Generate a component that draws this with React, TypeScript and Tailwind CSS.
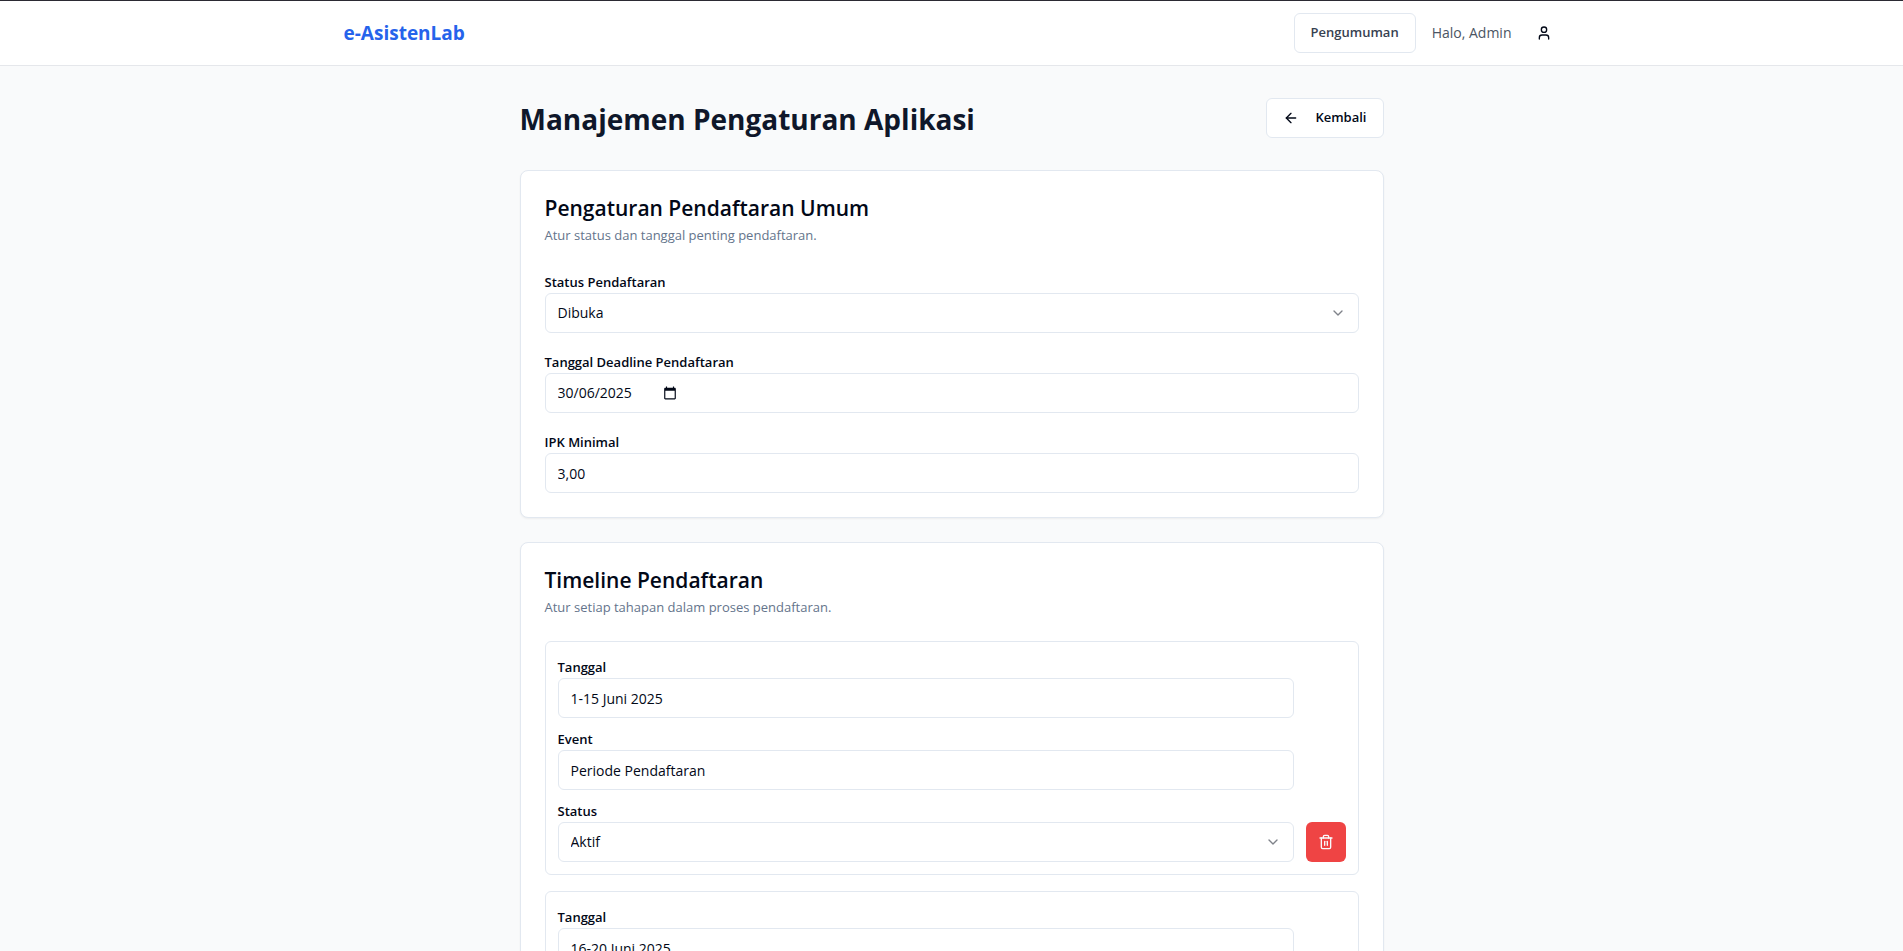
import { useState } from "react";
import type { ReactNode } from "react";
import { ArrowLeft, ChevronDown, Trash2, User } from "lucide-react";

type Stage = { id: number; date: string; event: string; status: string };

const INITIAL_STAGES: Stage[] = [
  { id: 1, date: "1-15 Juni 2025", event: "Periode Pendaftaran", status: "Aktif" },
  { id: 2, date: "16-20 Juni 2025", event: "", status: "Aktif" },
];

const CONTROL =
  "h-10 w-full rounded-md border border-[#e2e8f0] bg-white px-3 text-sm text-[#020817] outline-none focus:ring-2 focus:ring-[#94a3b8]";

function Field({ id, label, children }: { id: string; label: string; children: ReactNode }) {
  return (
    <div>
      <div className="flex h-6 items-center pt-0.5">
        <label htmlFor={id} className="text-[13px] leading-none font-semibold">
          {label}
        </label>
      </div>
      {children}
    </div>
  );
}

function Select({
  id,
  value,
  options,
  onChange,
}: {
  id: string;
  value: string;
  options: string[];
  onChange: (v: string) => void;
}) {
  return (
    <div className="relative">
      <select
        id={id}
        value={value}
        onChange={(e) => onChange(e.target.value)}
        className={`${CONTROL} appearance-none`}
      >
        {options.map((o) => (
          <option key={o}>{o}</option>
        ))}
      </select>
      <ChevronDown className="pointer-events-none absolute top-3 right-[13px] size-4 text-[#020817] opacity-50" />
    </div>
  );
}

function Card({ title, description, children }: { title: string; description: string; children: ReactNode }) {
  return (
    <section className="rounded-lg border border-[#e2e8f0] bg-white shadow-xs">
      <div className="flex flex-col gap-1 p-6">
        <h2 className="text-[21px] leading-[26px] font-semibold">{title}</h2>
        <p className="text-[13px] leading-5 text-[#64748b]">{description}</p>
      </div>
      <div className="flex flex-col gap-4 px-6 pb-6">{children}</div>
    </section>
  );
}

function CalendarIcon() {
  return (
    <svg viewBox="0 0 24 24" className="size-3.5" fill="currentColor" aria-hidden="true">
      <path d="M20 3h-1V1h-2v2H7V1H5v2H4c-1.100 0-2 .9-2 2v16c0 1.100.9 2 2 2h16c1.100 0 2-.9 2-2V5c0-1.100-.9-2-2-2zm0 18H4V8h16v13z" />
    </svg>
  );
}

export default function App() {
  const [open, setOpen] = useState("Dibuka");
  const [deadline, setDeadline] = useState("30/06/2025");
  const [gpa, setGpa] = useState("3,00");
  const [stages, setStages] = useState(INITIAL_STAGES);

  const update = (id: number, patch: Partial<Stage>) =>
    setStages((prev) => prev.map((s) => (s.id === id ? { ...s, ...patch } : s)));

  return (
    <div className="min-h-screen border-t border-[#2b2a33] bg-[#f9fafb] font-['Open_Sans','Noto_Sans',sans-serif] text-[#020817]">
      <header className="border-b border-[#e5e7eb] bg-white">
        <div className="mx-auto flex h-16 max-w-7xl items-center justify-between px-8">
          <a href="#" className="text-[19px] font-bold text-[#2563eb]">
            e-AsistenLab
          </a>
          <div className="flex items-center gap-4">
            <button
              type="button"
              className="h-10 rounded-md border border-[#e2e8f0] bg-white px-4 text-[13px] font-semibold text-[#374151]"
            >
              Pengumuman
            </button>
            <span className="text-sm text-[#4b5563]">Halo, Admin</span>
            <button type="button" aria-label="Profil" className="flex h-10 items-center rounded-md px-2">
              <User className="size-4" />
            </button>
          </div>
        </div>
      </header>

      <main className="mx-auto max-w-4xl px-4 py-8">
        <div className="mb-8 flex items-end justify-between">
          <h1 className="text-[28px] leading-[38px] font-bold text-[#0f172a]">Manajemen Pengaturan Aplikasi</h1>
          <button
            type="button"
            className="flex h-10 items-center gap-4 rounded-md border border-[#e2e8f0] bg-white px-4 text-[13px] font-semibold"
          >
            <ArrowLeft className="size-4" />
            Kembali
          </button>
        </div>

        <div className="flex flex-col gap-6">
          <Card title="Pengaturan Pendaftaran Umum" description="Atur status dan tanggal penting pendaftaran.">
            <Field id="status" label="Status Pendaftaran">
              <Select id="status" value={open} options={["Dibuka", "Ditutup"]} onChange={setOpen} />
            </Field>
            <Field id="deadline" label="Tanggal Deadline Pendaftaran">
              <div className="flex h-10 items-center rounded-md border border-[#e2e8f0] bg-white px-3">
                <input
                  id="deadline"
                  value={deadline}
                  onChange={(e) => setDeadline(e.target.value)}
                  className="w-[105px] bg-transparent text-sm outline-none"
                />
                <button type="button" aria-label="Pilih tanggal">
                  <CalendarIcon />
                </button>
              </div>
            </Field>
            <Field id="gpa" label="IPK Minimal">
              <input
                id="gpa"
                inputMode="decimal"
                value={gpa}
                onChange={(e) => setGpa(e.target.value)}
                className={CONTROL}
              />
            </Field>
          </Card>

          <Card title="Timeline Pendaftaran" description="Atur setiap tahapan dalam proses pendaftaran.">
            {stages.map((s) => (
              <div key={s.id} className="flex items-end gap-3 rounded-md border border-[#e2e8f0] p-3">
                <div className="flex flex-1 flex-col gap-2">
                  <Field id={`date-${s.id}`} label="Tanggal">
                    <input
                      id={`date-${s.id}`}
                      value={s.date}
                      onChange={(e) => update(s.id, { date: e.target.value })}
                      className={CONTROL}
                    />
                  </Field>
                  <Field id={`event-${s.id}`} label="Event">
                    <input
                      id={`event-${s.id}`}
                      value={s.event}
                      onChange={(e) => update(s.id, { event: e.target.value })}
                      className={CONTROL}
                    />
                  </Field>
                  <Field id={`status-${s.id}`} label="Status">
                    <Select
                      id={`status-${s.id}`}
                      value={s.status}
                      options={["Aktif", "Selesai"]}
                      onChange={(v) => update(s.id, { status: v })}
                    />
                  </Field>
                </div>
                <button
                  type="button"
                  aria-label="Hapus tahapan"
                  onClick={() => setStages((prev) => prev.filter((p) => p.id !== s.id))}
                  className="flex size-10 items-center justify-center rounded-md bg-[#ef4444] text-[#f8fafc]"
                >
                  <Trash2 className="size-4" />
                </button>
              </div>
            ))}
          </Card>
        </div>
      </main>
    </div>
  );
}
